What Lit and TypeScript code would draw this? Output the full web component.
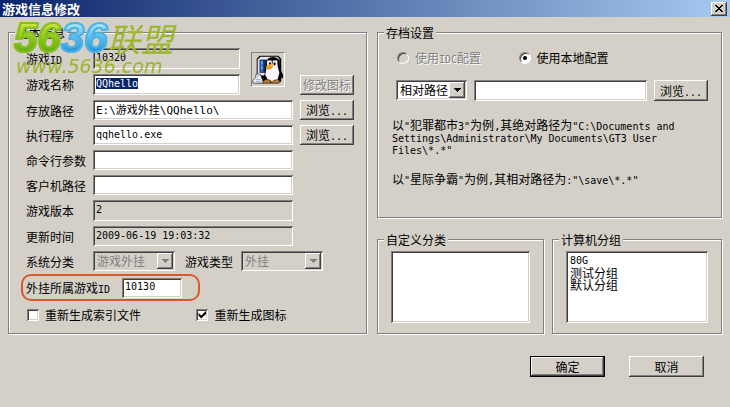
import { LitElement, html, css, svg } from "lit";
import { customElement, query } from "lit/decorators.js";

/** Sets half-width runs in the monospaced face so they take half a Han character each. */
const mix = (text: string) =>
  text
    .split(/([\x20-\x7e]+)/)
    .filter((run) => run)
    .map((run) => (/^[\x20-\x7e]/.test(run) ? html`<span class="half">${run}</span>` : run));

const arrow = html`<span class="arrow"
  ><svg width="7" height="4" viewBox="0 0 7 4" shape-rendering="crispEdges">
    <path d="M0 0h7v1h-1v1h-1v1h-1v1h-1v-1h-1v-1h-1v-1h-1z" fill="currentColor" /></svg
></span>`;

const penguin = svg`
  <path d="M5 31V5l3-3h20l3 3v24l-3 2z" fill="#000"/>
  <path d="M6 20V6l3-3h18l2 2v18H6z" fill="#e4e4ee"/>
  <path d="M8 6h9v14H8z" fill="#14285a"/>
  <path d="M9 7h3v12H9z" fill="#2f78c0"/>
  <path d="M10 8h1v3h-1zM10 13h1v3h-1z" fill="#9fd8f4"/>
  <path d="M16 7c1-5 11-5 13 0l1 9 3 6v4l-3-1-2 5H17l-4-6 1-8z" fill="#050508"/>
  <path d="M16 12c4-2 8-2 11 0l2 8-2 8-5 2-5-2-3-6z" fill="#f8f8fc"/>
  <path d="M16 7h5v6h-5zM22 7h5v6h-5z" fill="#f8f8fc"/>
  <path d="M18 9h2v3h-2zM23 9h2v3h-2z" fill="#000"/>
  <path d="M15 13l3-2h5l-1 3-4 3-2-1z" fill="#f3ac25"/>
  <path d="M17 14h4l-2 2z" fill="#d57711"/>
  <path d="M11 29l4-2 5 1v3h-8zM21 30l2-2 5-1 2 3-2 1h-6z" fill="#b87636" stroke="#301a08" stroke-width=".6"/>
  <path d="M1 31v-3l3-3v-3l2-1 3 1 2 5 1 4z" fill="#eef0fa" stroke="#222" stroke-width=".7"/>
  <path d="M5 24l3-1M4 27h5M4 29h6" stroke="#9aa6c4" fill="none"/>`;

@customElement("app-root")
export class AppRoot extends LitElement {
  @query("#name") private nameField!: HTMLInputElement;

  firstUpdated() {
    this.nameField.focus({ preventScroll: true });
    this.nameField.select();
  }

  static styles = css`
    :host {
      --face: #d4d0c8;
      --raised: inset -1px -1px #404040, inset 1px 1px #fff, inset -2px -2px #808080;
      --sunken: inset 1px 1px #808080, inset -1px -1px #fff, inset 2px 2px #404040,
        inset -2px -2px #d4d0c8;
      display: block;
      position: relative;
      min-height: 100vh;
      background: var(--face);
      color: #000;
      font: 12px/13px "Noto Sans CJK SC", sans-serif;
    }
    * {
      box-sizing: border-box;
    }
    button,
    input,
    select {
      margin: 0;
      border: 0;
      border-radius: 0;
      outline: 0;
      color: inherit;
      font: inherit;
      min-width: 0;
    }
    .half {
      font-family: "DejaVu Sans Mono", monospace;
      font-size: 10px;
      line-height: 0;
      white-space: pre-wrap;
    }
    .title {
      display: flex;
      align-items: center;
      justify-content: space-between;
      height: 17px;
      padding: 0 3px 0 2px;
      background: linear-gradient(to right, #0a246a, #a6caf0);
      color: #fff;
    }
    h1 {
      margin: 0;
      font-size: 13px;
      line-height: 16px;
      font-weight: 700;
    }
    .close {
      display: grid;
      place-items: center;
      width: 16px;
      height: 14px;
      padding: 0 1px 1px 0;
      background: var(--face);
      box-shadow: var(--raised);
    }
    .body {
      display: grid;
      grid-template-columns: 359fr 345fr;
      gap: 10px;
      padding: 9px 8px 0;
    }
    .side {
      display: flex;
      flex-direction: column;
      gap: 15px;
      min-width: 0;
    }
    .pair {
      display: grid;
      grid-template-columns: 167fr 170fr;
      gap: 8px;
      flex: 1;
    }
    fieldset {
      min-width: 0;
      margin: 0;
      padding: 0 6px;
      border: 1px solid #808080;
      box-shadow: 1px 1px #fff, inset 1px 1px #fff;
    }
    legend {
      height: 13px;
      padding: 0 2px;
      background: var(--face);
    }
    .form {
      display: grid;
      grid-template-columns: 67px 147fr 53fr 7px 54px;
      row-gap: 5px;
      padding: 9px 6px 0 11px;
      align-items: center;
    }
    .form > label {
      grid-column: 1;
      white-space: nowrap;
    }
    .field {
      width: 100%;
      height: 20px;
      padding: 0 3px 2px;
      background: #fff;
      box-shadow: var(--sunken);
      font-family: "DejaVu Sans Mono", "Noto Sans CJK SC", monospace;
      font-size: 10px;
    }
    .field::selection {
      background: #0a246a;
      color: #fff;
    }
    .tall {
      height: 21px;
    }
    .mixed {
      font-size: 11px;
    }
    .field[readonly] {
      background: var(--face);
    }
    .wide {
      grid-column: 2 / 4;
    }
    .icon {
      grid-column: 3;
      grid-row: 1 / 3;
      justify-self: end;
      align-self: start;
      width: 34px;
      height: 35px;
      margin: 4px 8px 0 0;
      border: 1px solid;
      border-color: #808080 #fff #fff #808080;
    }
    .icon svg {
      display: block;
    }
    .btn {
      height: 21px;
      padding: 0 0 1px;
      background: var(--face);
      box-shadow: var(--raised);
      white-space: nowrap;
    }
    .last {
      grid-column: 5;
      height: 20px;
    }
    .btn:disabled,
    .off {
      color: #808080;
      text-shadow: 1px 1px #fff;
    }
    .types {
      grid-column: 2 / 6;
      display: flex;
      align-items: center;
      gap: 8px;
    }
    .types label {
      padding-left: 2px;
    }
    .combo {
      display: grid;
      width: 82px;
      height: 20px;
      background: #fff;
      box-shadow: var(--sunken);
    }
    .combo > * {
      grid-area: 1 / 1;
    }
    .combo select {
      appearance: none;
      width: 100%;
      padding: 0 18px 1px 4px;
      background: none;
    }
    .combo select:disabled {
      opacity: 1;
    }
    .combo.dim {
      background: var(--face);
      color: #808080;
    }
    .path {
      width: 71px;
      flex: none;
    }
    .arrow {
      display: grid;
      place-items: center;
      justify-self: end;
      width: 16px;
      margin: 2px;
      background: var(--face);
      box-shadow: var(--raised);
      pointer-events: none;
    }
    .marked {
      display: flex;
      align-items: center;
      gap: 12px;
      width: 179px;
      height: 27px;
      margin: 3px 0 0 6px;
      padding: 0 3px;
      border: 2px solid #d65a2b;
      border-radius: 10px;
    }
    .marked .field {
      width: 60px;
    }
    .checks {
      display: grid;
      grid-template-columns: 170fr 164fr;
      padding: 7px 0 12px 12px;
    }
    .check {
      display: flex;
      align-items: center;
      gap: 6px;
    }
    .box {
      appearance: none;
      display: grid;
      place-items: center;
      width: 12px;
      height: 12px;
      background: #fff;
      box-shadow: var(--sunken);
    }
    .box:checked::before {
      content: "";
      width: 8px;
      height: 8px;
      background: #000;
      clip-path: polygon(0 30%, 35% 62%, 100% 0, 100% 36%, 35% 100%, 0 66%);
    }
    .radios {
      display: grid;
      grid-template-columns: 120fr 194fr;
      padding: 12px 0 0 13px;
    }
    .dot {
      appearance: none;
      display: grid;
      place-items: center;
      width: 12px;
      height: 12px;
      border: 1px solid;
      border-color: #808080 #fff #fff #808080;
      border-radius: 50%;
      background: #fff;
      box-shadow: inset 1px 1px #404040;
    }
    .dot:disabled {
      background: var(--face);
    }
    .dot:checked::before {
      content: "";
      width: 4px;
      height: 4px;
      border-radius: 50%;
      background: #000;
    }
    .where {
      display: flex;
      gap: 7px;
      padding: 16px 7px 0 12px;
    }
    .where .field {
      flex: 1;
    }
    .where .btn {
      width: 54px;
    }
    .note {
      margin: 18px 0 0 8px;
      line-height: 12px;
      white-space: nowrap;
    }
    .note + .note {
      padding-bottom: 32px;
    }
    .list {
      appearance: none;
      display: block;
      width: calc(100% - 14px);
      height: 72px;
      margin: 5px 7px 9px;
      padding: 3px 2px;
      background: #fff;
      box-shadow: var(--sunken);
      overflow: hidden;
    }
    .list option {
      display: flex;
      align-items: center;
      height: 12px;
      min-height: 12px;
      padding: 0 2px;
    }
    .latin {
      font: 10px/12px "DejaVu Sans Mono", monospace;
    }
    .actions {
      display: flex;
      justify-content: flex-end;
      gap: 24px;
      padding: 22px 26px 29px;
    }
    .actions .btn {
      width: 75px;
    }
    .actions .default {
      box-shadow: inset 0 0 0 1px #000, inset -2px -2px #404040, inset 2px 2px #fff,
        inset -3px -3px #808080;
    }
    .brand {
      position: absolute;
      left: 14px;
      top: 18px;
      pointer-events: none;
      font-style: italic;
      white-space: nowrap;
    }
    .name {
      display: flex;
      align-items: center;
      height: 40px;
      font: italic 700 42px/44px "Liberation Sans", sans-serif;
    }
    .green,
    .blue {
      background-clip: text;
      -webkit-background-clip: text;
      color: transparent;
    }
    .green {
      background-image: linear-gradient(#c9e23c 20%, #8cc820 50%, #5ea60c 85%);
      -webkit-text-stroke: 2px #84bf1c;
    }
    .blue {
      background-image: linear-gradient(#a5e2fa 20%, #56bcec 50%, #1f8fd6 85%);
      -webkit-text-stroke: 2px #4fb2e4;
    }
    .union {
      color: #9db52c;
      font: italic 400 33px/42px "Noto Sans CJK SC", sans-serif;
    }
    .site {
      padding-left: 2px;
      color: #9db52c;
      font: italic 200 19px/16px "DejaVu Sans", sans-serif;
    }
  `;

  render() {
    return html`
      <header class="title">
        <h1>游戏信息修改</h1>
        <button class="close" aria-label="关闭">
          <svg width="8" height="7" viewBox="0 0 8 7" shape-rendering="crispEdges">
            <path
              d="M0 0h2v1h1v1h2v-1h1v-1h2v1h-1v1h-1v1h-1v1h1v1h1v1h1v1h-2v-1h-1v-1h-2v1h-1v1h-2v-1h1v-1h1v-1h1v-1h-1v-1h-1v-1h-1z"
            />
          </svg>
        </button>
      </header>
      <main class="body">
        <fieldset>
          <legend>基本信息</legend>
          <div class="form">
            <label for="gid">${mix("游戏ID")}</label>
            <input id="gid" class="field tall" readonly value="10320" />
            <span class="icon"
              ><svg width="32" height="33" viewBox="0 0 34 33">${penguin}</svg></span
            >
            <label for="name">游戏名称</label>
            <input id="name" class="field tall" value="QQhello" />
            <button class="btn last" disabled>修改图标</button>

            <label for="dir">存放路径</label>
            <input id="dir" class="field mixed wide" value="E:\\游戏外挂\\QQhello\\" />
            <button class="btn last">${mix("浏览...")}</button>

            <label for="exe">执行程序</label>
            <input id="exe" class="field wide" value="qqhello.exe" />
            <button class="btn last">${mix("浏览...")}</button>

            <label for="args">命令行参数</label>
            <input id="args" class="field wide" />
            <label for="client">客户机路径</label>
            <input id="client" class="field wide" />
            <label for="ver">游戏版本</label>
            <input id="ver" class="field tall wide" readonly value="2" />
            <label for="time">更新时间</label>
            <input id="time" class="field wide" readonly value="2009-06-19 19:03:32" />

            <label for="sys">系统分类</label>
            <div class="types">
              <span class="combo dim"
                ><select id="sys" disabled><option>游戏外挂</option></select>${arrow}</span
              >
              <label for="kind">游戏类型</label>
              <span class="combo dim"
                ><select id="kind" disabled><option>外挂</option></select>${arrow}</span
              >
            </div>
          </div>
          <div class="marked">
            <label for="owner">${mix("外挂所属游戏ID")}</label>
            <input id="owner" class="field" value="10130" />
          </div>
          <div class="checks">
            <label class="check"><input class="box" type="checkbox" />重新生成索引文件</label>
            <label class="check"><input class="box" type="checkbox" checked />重新生成图标</label>
          </div>
        </fieldset>

        <div class="side">
          <fieldset>
            <legend>存档设置</legend>
            <div class="radios">
              <label class="check off"
                ><input class="dot" type="radio" name="conf" disabled /><span
                  >${mix("使用IDC配置")}</span
                ></label
              >
              <label class="check"
                ><input class="dot" type="radio" name="conf" checked />使用本地配置</label
              >
            </div>
            <div class="where">
              <span class="combo path"
                ><select aria-label="路径类型"><option>相对路径</option></select>${arrow}</span
              >
              <input class="field tall" aria-label="路径" />
              <button class="btn">${mix("浏览...")}</button>
            </div>
            <p class="note">
              ${mix('以"犯罪都市3"为例,其绝对路径为"C:\\Documents and')}<br />
              ${mix("Settings\\Administrator\\My Documents\\GT3 User")}<br />
              ${mix('Files\\*.*"')}
            </p>
            <p class="note">${mix('以"星际争霸"为例,其相对路径为:"\\save\\*.*"')}</p>
          </fieldset>
          <div class="pair">
            <fieldset>
              <legend>自定义分类</legend>
              <select class="list" multiple size="5" aria-label="自定义分类"></select>
            </fieldset>
            <fieldset>
              <legend>计算机分组</legend>
              <select class="list" multiple size="5" aria-label="计算机分组">
                <option class="latin">80G</option>
                <option>测试分组</option>
                <option>默认分组</option>
              </select>
            </fieldset>
          </div>
        </div>
      </main>
      <footer class="actions">
        <button class="btn default">确定</button>
        <button class="btn">取消</button>
      </footer>
      <div class="brand">
        <div class="name">
          <span class="green">56</span><span class="blue">36</span><span class="union">联盟</span>
        </div>
        <div class="site">www.5636.com</div>
      </div>
    `;
  }
}
